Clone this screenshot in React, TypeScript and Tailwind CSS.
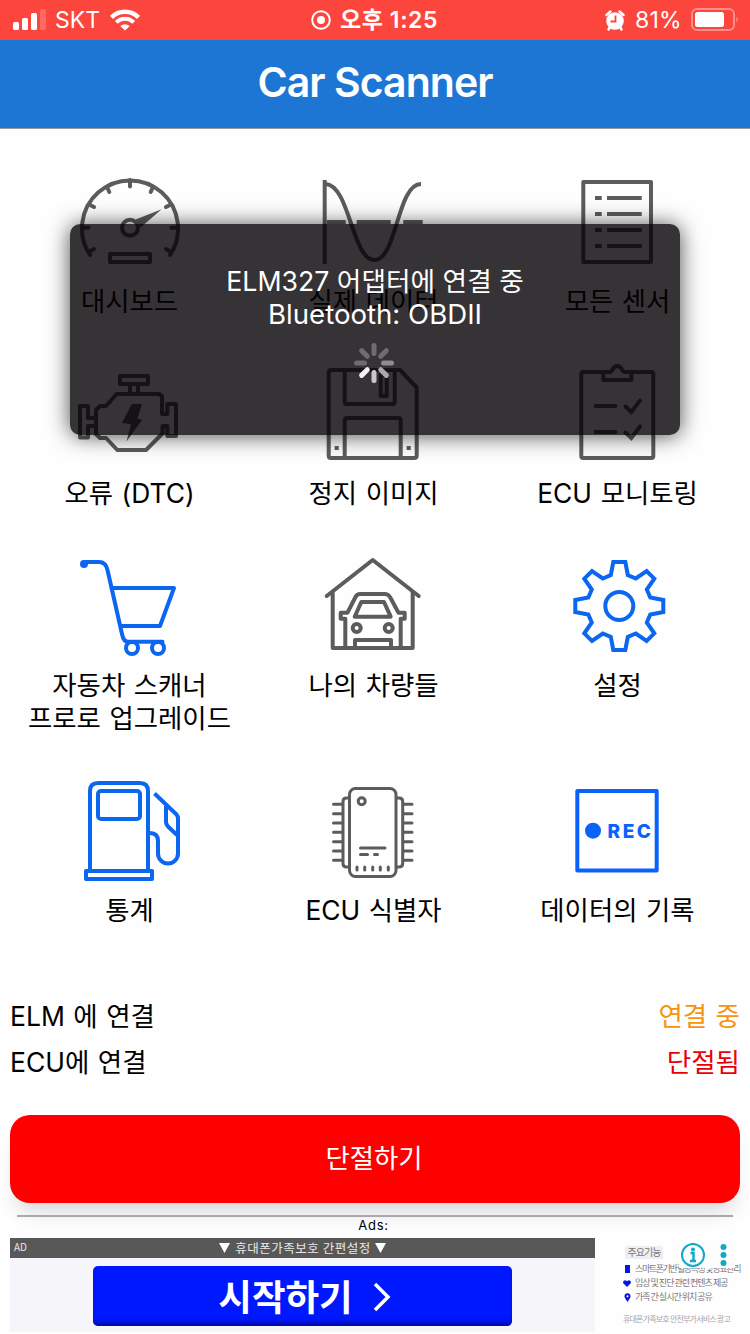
import React from 'react';

const GRAY = '#5c5b5e';
const BLUE = '#0b66f0';

type IconProps = { box: string; color?: string; width?: number; children: React.ReactNode };

const Icon = ({ box, color = GRAY, width = 4, children }: IconProps) => (
  <svg
    width="120"
    height="110"
    viewBox={box}
    fill="none"
    stroke={color}
    strokeWidth={width}
    strokeLinejoin="round"
    className="block shrink-0"
  >
    {children}
  </svg>
);

const DashboardIcon = () => (
  <Icon box="70 170 120 110">
    <path d="M90 255A48 48 0 1 1 170 255" strokeLinecap="round" />
    <path
      d="M130 180v6.500M107.500 188l1.800 4M152.500 188l-1.800 4M90 205l4 2M170 205l-4 2M83 227.700h5.500M177 227.700h-5.500M90.500 251l3.500-2M169.500 251l-3.500-2"
      strokeLinecap="round"
    />
    <circle cx="130" cy="227.700" r="8" />
    <path d="M135.500 219.500L161.700 209.300L140.500 227.500Z" fill={GRAY} stroke="none" />
    <rect x="110" y="254" width="40" height="8" />
  </Icon>
);

const LiveDataIcon = () => (
  <Icon box="314 170 120 110">
    <path d="M324.700 180V264" />
    <path d="M326 184C350 186 352 260 374.500 260C397 260 397 184 421 184" />
    <path d="M327 222h18.700M356.700 222h34M403.300 222h19.400" />
  </Icon>
);

const SensorsIcon = () => (
  <Icon box="558 170 120 110">
    <rect x="583.300" y="182" width="67.700" height="80" />
    <path d="M595 198h6.700M607 198h34.700M595 214h6.700M607 214h34.700M595 230h6.700M607 230h34.700M595 246h6.700M607 246h34.700" />
  </Icon>
);

const EngineIcon = () => (
  <Icon box="70 362 120 110">
    <rect x="120" y="376" width="28" height="8" />
    <path d="M130 384v9M138 384v9" />
    <path d="M116.700 394H159.500L162 396.500V414H167.300V404H176V436H167.300V426H162.500V433.500L146 450H117.300L106 438H100L96 434V410L100 406H106Z" />
    <path d="M96 418H88V406H80V437.500H88V426H96" />
    <path d="M131.700 404H142L137.500 418.500L142 420L126.500 441.500L131 424L122 423Z" fill={GRAY} stroke="none" />
  </Icon>
);

const FloppyIcon = () => (
  <Icon box="314 362 120 110">
    <path d="M331 370H400L416.700 387.500V455.500Q416.700 458 414 458H331Q328.700 458 328.700 455.500V372.500Q328.700 370 331 370Z" />
    <path d="M344.700 370V402Q344.700 404 346.700 404H392.700Q394.700 404 394.700 402V370" />
    <rect x="380.700" y="375" width="6" height="21" />
    <path d="M344.700 458V420.500Q344.700 418 347 418H398Q400.700 418 400.700 420.500V458" />
    <path d="M334.700 448h4M406.700 448h4" />
  </Icon>
);

const ClipboardIcon = () => (
  <Icon box="558 362 120 110">
    <path d="M603.300 372H583.300a2 2 0 0 0-2 2V456a2 2 0 0 0 2 2H651.300a2 2 0 0 0 2-2V374a2 2 0 0 0-2-2H631.300" />
    <path d="M603.300 372V380H631.300V372H624.600C621.600 372 622.600 366 617.300 366S613 372 610 372Z" />
    <path
      d="M595.500 406h20M595.500 432h20M625.500 406.500l5.800 5.500L640 400.500M625.500 432.500l5.800 5.500L640 426.500"
      strokeLinecap="round"
      strokeLinejoin="miter"
    />
  </Icon>
);

const CartIcon = () => (
  <Icon box="70 554 120 110" color={BLUE}>
    <circle cx="84" cy="564" r="4" fill={BLUE} stroke="none" />
    <path
      d="M84 562H99C104 562 106.500 565 107.500 570L122 634C123 639 125 641.800 128 641.800H162.500M111.300 588H174L160 626H120.700"
      strokeLinecap="round"
    />
    <circle cx="132" cy="648" r="6" />
    <circle cx="158" cy="648" r="6" />
  </Icon>
);

const GarageIcon = () => (
  <Icon box="314 554 120 110">
    <path d="M326.700 596L372.700 560L418.700 596" strokeLinecap="round" />
    <path d="M332.700 591V648H412.700V591" />
    <path d="M345.300 648V618.700H340.700V612.700H347.500L355.500 597Q357 594 360 594H385Q388 594 390 597L398.500 612.700H404.700V618.700H400.700V648" />
    <path d="M361.300 602H384L390.700 616.700H354.700Z" />
    <circle cx="356.700" cy="628" r="4" />
    <circle cx="388.700" cy="628" r="4" />
    <path d="M355 648V640H391V648" />
  </Icon>
);

const GearIcon = () => (
  <Icon box="558 554 120 110" color={BLUE}>
    <g transform="translate(619.300 606)">
      <circle r="14" />
      <path
        d="M-6-44L6-44L8.500-31L16.500-27.500L27.300-35L35-27.300L27.500-16.500L31-8.500L44-6L44 6L31 8.500L27.500 16.500L35 27.300L27.300 35L16.500 27.500L8.500 31L6 44L-6 44L-8.500 31L-16.500 27.500L-27.300 35L-35 27.300L-27.500 16.500L-31 8.500L-44 6L-44-6L-31-8.500L-27.500-16.500L-35-27.300L-27.300-35L-16.500-27.500L-8.500-31Z"
        strokeLinejoin="miter"
      />
    </g>
  </Icon>
);

const FuelIcon = () => (
  <Icon box="70 779 120 110" color={BLUE}>
    <path d="M90 871V791Q90 783 98 783H140Q148 783 148 791V871" />
    <rect x="86" y="871" width="66" height="8" />
    <rect x="98" y="791" width="42" height="28" rx="3" />
    <path d="M154.500 793.500L176.500 814.500Q178 816 178 819V853.500A10 10 0 0 1 158 853.500V841Q158 833 150 833" />
    <path d="M166 806V822Q166 824.500 168 826.500L177 835" />
  </Icon>
);

const pins = [804.3, 813.7, 823, 832.3, 841.7, 851, 860.3];

const ChipIcon = () => (
  <Icon box="314 779 120 110" width={3}>
    <rect x="349.500" y="788.500" width="46.500" height="88" rx="6" />
    <circle cx="361.700" cy="801.300" r="3.500" />
    <path d="M349 798H346.500Q343 798 343 801.500V863.500Q343 867 346.500 867H349M396.500 798H399Q402.700 798 402.700 801.500V863.500Q402.700 867 399 867H396.500" />
    {pins.map((y) => (
      <path key={y} d={`M333.500 ${y}H342M403.500 ${y}H412`} strokeLinecap="round" />
    ))}
    <path
      d="M360.500 848H385M360.500 854.500H367.500M374.500 854.500H377.500M357 867v3M364.700 867v3M372.700 867v3M380.300 867v3M388.300 867v3"
      strokeLinecap="round"
    />
  </Icon>
);

const RecIcon = () => (
  <Icon box="558 779 120 110" color="#0b62fb">
    <rect x="577.300" y="791" width="79.400" height="79.400" />
    <circle cx="593" cy="830.700" r="8" fill="#0b62fb" stroke="none" />
    <text x="607.500" y="837.500" fill="#0b62fb" stroke="none" fontSize="19" textLength="43.500" className="font-['Inter'] font-extrabold">
      REC
    </text>
  </Icon>
);

const items = [
  { label: ['대시보드'], icon: <DashboardIcon /> },
  { label: ['실제 데이터'], icon: <LiveDataIcon /> },
  { label: ['모든 센서'], icon: <SensorsIcon /> },
  { label: ['오류 (DTC)'], icon: <EngineIcon /> },
  { label: ['정지 이미지'], icon: <FloppyIcon /> },
  { label: ['ECU 모니토링'], icon: <ClipboardIcon /> },
  { label: ['자동차 스캐너', '프로로 업그레이드'], icon: <CartIcon /> },
  { label: ['나의 차량들'], icon: <GarageIcon /> },
  { label: ['설정'], icon: <GearIcon /> },
  { label: ['통계'], icon: <FuelIcon /> },
  { label: ['ECU 식별자'], icon: <ChipIcon /> },
  { label: ['데이터의 기록'], icon: <RecIcon /> },
];

const StatusBar = () => (
  <div className="grid h-10 grid-cols-3 items-center bg-[#fc453c] text-[23px] text-white">
    <div className="flex items-center pl-[13px]">
      <svg width="33" height="22" viewBox="0 0 33 22" fill="#fff">
        <rect x="0" y="13" width="6" height="8" rx="1.500" />
        <rect x="9" y="9" width="6" height="12" rx="1.500" />
        <rect x="18" y="4" width="6" height="17" rx="1.500" />
        <rect x="27" y="0" width="6" height="21" rx="1.500" opacity="0.2" />
      </svg>
      <span className="ml-[9px] pt-px">SKT</span>
      <svg width="30" height="22" viewBox="0 0 30 22" className="ml-[10px]" fill="none" stroke="#fff" strokeWidth="4.500">
        <path d="M1.500 8.500A19 19 0 0 1 28.500 8.500" />
        <path d="M6.300 13.400A12 12 0 0 1 23.700 13.400" strokeWidth="4" />
        <path d="M15 21.500L10.300 17Q15 13.500 19.700 17Z" fill="#fff" stroke="none" />
      </svg>
    </div>
    <div className="flex items-center justify-center gap-[9px] pr-px font-semibold">
      <svg width="20" height="20" viewBox="0 0 20 20">
        <circle cx="10" cy="10" r="8.800" fill="none" stroke="#fff" strokeWidth="2" />
        <circle cx="10" cy="10" r="4" fill="#fff" />
      </svg>
      <span className="tracking-[0.6px]">오후 1:25</span>
    </div>
    <div className="flex items-center justify-end pr-[11px]">
      <svg width="20" height="21" viewBox="0 0 20 21">
        <circle cx="10" cy="11" r="8.800" fill="#fff" />
        <path d="M1.500 5L5.500 1.500M18.500 5L14.500 1.500M3.500 19.500L5 17M16.500 19.500L15 17" stroke="#fff" strokeWidth="2.500" strokeLinecap="round" />
        <path d="M10.500 5.500V11.500H5.500" fill="none" stroke="#fc453c" strokeWidth="1.800" />
      </svg>
      <span className="ml-[10px] pt-px tracking-[0.3px]">81%</span>
      <svg width="48" height="24" viewBox="0 0 48 24" className="ml-[9px]">
        <rect x="1" y="1" width="42" height="21" rx="5" fill="none" stroke="#fff" strokeWidth="2" opacity="0.4" />
        <rect x="4" y="4" width="29" height="15" rx="2.500" fill="#fff" />
        <path d="M45.500 8.500Q48 11.500 45.500 14.500Z" fill="#fff" opacity="0.5" />
      </svg>
    </div>
  </div>
);

const spokes = ['#6e6c6f', '#6e6c6f', '#8e8c8f', '#aba9ac', '#c9c7ca', '#f2f0f3', '#6e6c6f', '#6e6c6f'];

const ConnectingModal = () => (
  <div className="absolute left-[70px] top-[224px] flex h-[211px] w-[610px] flex-col items-center rounded-[10px] bg-[#030003]/80 pt-[41px] text-[26.7px] leading-[33px] text-white shadow-[0_1px_22px_rgba(0,0,0,0.7)]">
    <div className="whitespace-nowrap">ELM327 어댑터에 연결 중</div>
    <div className="text-[27.6px]">Bluetooth: OBDII</div>
    <svg width="40" height="40" viewBox="-20 -20 40 40" className="mt-3 mr-0.5" strokeWidth="5" strokeLinecap="round">
      {spokes.map((c, i) => (
        <path key={i} d="M0-9.500V-17.500" stroke={c} transform={`rotate(${i * 45})`} />
      ))}
    </svg>
  </div>
);

const AdBanner = () => (
  <div className="ml-[10px] flex h-[94px] font-['Noto_Sans_CJK_KR',sans-serif]">
    <div className="w-[585px] shrink-0 bg-[#f6f5fa]">
      <div className="relative flex h-5 items-center justify-center bg-[#585858] text-[12.5px] text-[#e8e8e8]">
        <span className="absolute left-1 top-0 text-[10px] leading-[17px]">AD</span>
        <svg width="11" height="10" viewBox="0 0 11 10" className="mr-[5px]" fill="#fff">
          <path d="M0 0H11L5.500 10Z" />
        </svg>
        <span className="tracking-[0.5px]">휴대폰가족보호 간편설정</span>
        <svg width="11" height="10" viewBox="0 0 11 10" className="ml-1" fill="#fff">
          <path d="M0 0H11L5.500 10Z" />
        </svg>
      </div>
      <div className="ml-[83px] mt-2 flex h-[60px] w-[419px] items-center justify-center rounded-[5px] bg-[#0018ff] pl-1 text-[36.500px] font-bold text-white shadow-[inset_0_-5px_5px_-2px_rgba(0,0,80,0.6)]">
        <span className="text-[36.5px]">시작하기</span>
        <svg width="18" height="30" viewBox="0 0 18 30" className="ml-5 mt-0.5" fill="none" stroke="#fff" strokeWidth="3.500">
          <path d="M2 2L15 15L2 28" />
        </svg>
      </div>
    </div>
    <div className="relative flex-1 pl-[28px] pt-2 text-[9px] leading-[14px] tracking-[-1px] text-[#77777c]">
      <div className="ml-0.5 h-[13px] w-[38px] bg-[#efeff1] text-center text-[10px] leading-[12px]">주요기능</div>
      <div className="mt-[3px] flex items-center gap-1 whitespace-nowrap tracking-[-1.4px]">
        <svg width="8" height="9" viewBox="0 0 8 9" fill="#0a14e6">
          <rect x="2" y="0" width="5" height="8" />
        </svg>
        스마트폰기반 혈당측정 및 당뇨관리
      </div>
      <div className="flex items-center gap-1 whitespace-nowrap">
        <svg width="8" height="9" viewBox="0 0 8 9" fill="#0a14e6">
          <path d="M4 8L0 4Q0 0 4 2Q8 0 8 4Z" />
        </svg>
        임상 및 진단 관련 컨텐츠 제공
      </div>
      <div className="flex items-center gap-1 whitespace-nowrap">
        <svg width="8" height="9" viewBox="0 0 8 9">
          <path d="M4.500 9Q1.500 5 1.500 3.300A3 3 0 0 1 7.500 3.300Q7.500 5 4.500 9Z" fill="#0a14e6" />
          <circle cx="4.500" cy="3.300" r="1" fill="#fff" />
        </svg>
        가족 간 실시간 위치 공유
      </div>
      <div className="mt-2 whitespace-nowrap text-[8px] tracking-[-0.8px] text-[#a5a5a9]">휴대폰가족보호 안전부가서비스 광고</div>
      <div className="absolute left-[84px] top-[2px] flex items-center gap-[13px] bg-[#fdfdfe] pl-0.5 pr-2">
        <svg width="26" height="28" viewBox="0 0 26 28">
          <circle cx="12" cy="15" r="11" fill="none" stroke="#12a9c8" strokeWidth="2" />
          <circle cx="12" cy="9.500" r="2" fill="#12a9c8" />
          <path d="M9.500 13H12.500V20.500M9 21H15" fill="none" stroke="#12a9c8" strokeWidth="2.500" />
        </svg>
        <svg width="7" height="28" viewBox="0 0 7 28" fill="#12a9c8">
          <circle cx="3.500" cy="7" r="3" />
          <circle cx="3.500" cy="15" r="3" />
          <circle cx="3.500" cy="23" r="3" />
        </svg>
      </div>
    </div>
  </div>
);

export default function App() {
  return (
    <div className="relative h-[1334px] w-[750px] overflow-hidden bg-[#fefefe] font-['Inter','Noto_Sans_CJK_KR',sans-serif] text-black">
      <StatusBar />
      <div className="flex h-[89px] items-center justify-center border-b border-[#9a9a9c] bg-[#1e76d4] pb-[3px] text-[41px] font-semibold tracking-[-0.95px] text-white">
        Car Scanner
      </div>

      <div className="mt-[41px] grid grid-cols-[244px_244px_244px] gap-y-11 pl-2">
        {items.map((item) => (
          <div key={item.label[0]} className="flex flex-col items-center gap-[5px]">
            {item.icon}
            <div className="mr-px whitespace-nowrap text-center text-[26.4px] leading-[33px] [word-spacing:1.2px]">
              {item.label.map((line) => (
                <div key={line}>{line}</div>
              ))}
            </div>
          </div>
        ))}
      </div>

      <div className="mt-[66px] px-[10px] text-[26.5px] leading-[46px] [word-spacing:1px]">
        <div className="flex justify-between">
          <span>ELM 에 연결</span>
          <span className="text-[#f7930e]">연결 중</span>
        </div>
        <div className="flex justify-between">
          <span>ECU에 연결</span>
          <span className="text-[#e90008]">단절됨</span>
        </div>
      </div>

      <div className="mx-[10px] mt-[30px] flex h-[88px] items-center justify-center rounded-[20px] bg-[#ff0000] pr-0.5 text-[26.4px] text-white shadow-[0_16px_20px_-8px_rgba(60,50,70,0.2)]">
        단절하기
      </div>
      <div className="relative mx-[17px] mt-3 h-[2px] bg-[#a9a8ac]" />
      <div className="relative h-[21px] pr-[3px] text-center text-[13px] leading-[17px] tracking-[0.8px]">Ads:</div>
      <AdBanner />

      <ConnectingModal />
    </div>
  );
}
